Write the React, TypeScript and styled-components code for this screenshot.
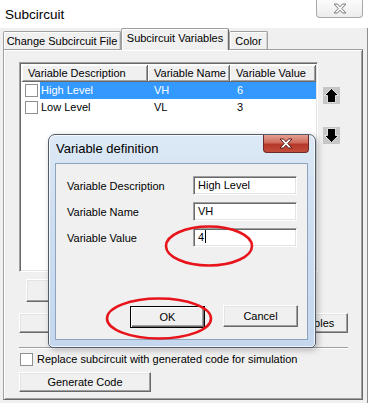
import styled, { createGlobalStyle, css } from "styled-components";

const GlobalStyle = createGlobalStyle`
  html, body {
    margin: 0;
    padding: 0;
    background: #fff;
  }
  body {
    font-family: "Liberation Sans", Arial, sans-serif;
    font-size: 11px;
    color: #000;
  }
`;

const Screen = styled.div`
  position: relative;
  width: 373px;
  height: 407px;
  overflow: hidden;
  background: #fff;
`;

// ---- main window frame
const TitleBar = styled.div`
  width: 368px;
  height: 28px;
  display: flex;
  justify-content: space-between;
  align-items: flex-start;
  padding-left: 5px;
  box-sizing: border-box;
`;

const WindowTitle = styled.div`
  font-size: 13.5px;
  line-height: 29px;
`;

const FrameClose = styled.div`
  width: 47px;
  height: 18px;
  margin-right: 5px;
  box-sizing: border-box;
  border: 1px solid #a9a9a9;
  border-top: none;
  border-radius: 0 0 4px 4px;
  background: linear-gradient(#fbfbfb, #ededed);
  display: flex;
  align-items: center;
  justify-content: center;
`;

const Client = styled.div`
  width: 368px;
  height: 375px;
  box-sizing: border-box;
  background: #f0f0f0;
  border-right: 1px solid #8c8c8c;
  padding: 0 4px 3px 3px;
  display: flex;
  flex-direction: column;
`;

// ---- tabs
const TabStrip = styled.div`
  height: 21px;
  display: flex;
  align-items: flex-end;
  position: relative;
  z-index: 1;
`;

const Tab = styled.div<{ $active?: boolean; $w: number }>`
  width: ${(p) => p.$w}px;
  height: 18px;
  box-sizing: border-box;
  border: 1px solid #a0a0a0;
  border-bottom: none;
  border-radius: 2px 2px 0 0;
  box-shadow: inset 1px 1px 0 #fff, inset -1px 0 0 #d4d4d4;
  background: #f0f0f0;
  text-align: center;
  line-height: 18px;
  ${(p) =>
    p.$active &&
    css`
      height: 22px;
      line-height: 19px;
      margin-bottom: -1px;
      border-right-color: #696969;
    `}
`;

const Panel = styled.div`
  flex: 1;
  box-sizing: border-box;
  border: 1px solid;
  border-color: #a0a0a0 #696969 #696969 #a0a0a0;
  box-shadow: inset 1px 1px 0 #fff, inset -1px -1px 0 #a0a0a0;
  padding: 12px 14px 0 15px;
  display: flex;
  flex-direction: column;
  align-items: flex-start;
`;

// ---- list view
const ListBlock = styled.div`
  display: flex;
  height: 210px;
`;

const ListView = styled.div`
  width: 299px;
  height: 210px;
  box-sizing: border-box;
  border: 1px solid;
  border-color: #a0a0a0 #fff #fff #a0a0a0;
  box-shadow: inset 1px 1px 0 #696969, inset -1px -1px 0 #e3e3e3;
  background: #fff;
  padding: 2px 1px 0 2px;
`;

const HeaderRow = styled.div`
  display: flex;
  height: 17px;
`;

const HeaderCell = styled.div<{ $w: number }>`
  width: ${(p) => p.$w}px;
  box-sizing: border-box;
  background: #f0f0f0;
  border-right: 1px solid #696969;
  border-bottom: 1px solid #696969;
  box-shadow: inset 1px 1px 0 #fff, inset -1px -1px 0 #a0a0a0;
  padding-left: 6px;
  line-height: 16px;
  white-space: nowrap;
  overflow: hidden;
`;

const HeaderFill = styled.div`
  flex: 1;
  background: #f0f0f0;
  border-bottom: 1px solid #696969;
`;

const Row = styled.div`
  display: flex;
  height: 17px;
`;

const CheckCell = styled.div`
  width: 18px;
  display: flex;
  align-items: center;
  padding-left: 3px;
  box-sizing: border-box;
`;

const Box = styled.div`
  width: 13px;
  height: 13px;
  flex: none;
  box-sizing: border-box;
  border: 1px solid #8e8f8f;
  background: #fff;
`;

const RowBody = styled.div<{ $selected?: boolean }>`
  flex: 1;
  display: grid;
  grid-template-columns: 108px 82px 86px;
  line-height: 17px;
  background: ${(p) => (p.$selected ? "#3399ff" : "transparent")};
  color: ${(p) => (p.$selected ? "#fff" : "#000")};
`;

const Cell = styled.div<{ $pad: number }>`
  padding-left: ${(p) => p.$pad}px;
  white-space: nowrap;
`;

const ArrowCol = styled.div`
  margin-left: 5px;
  padding-top: 25px;
  display: flex;
  flex-direction: column;
  gap: 23px;
`;

// ---- buttons
const Button = styled.div<{ $w: number; $h?: number; $default?: boolean }>`
  width: ${(p) => p.$w}px;
  height: ${(p) => p.$h ?? 20}px;
  flex: none;
  box-sizing: border-box;
  background: #f0f0f0;
  border: 1px solid;
  border-color: #fff #696969 #696969 #fff;
  box-shadow: inset -1px -1px 0 #a0a0a0, inset 1px 1px 0 #e3e3e3;
  display: flex;
  align-items: center;
  justify-content: center;
  white-space: nowrap;
  overflow: hidden;
  ${(p) =>
    p.$default &&
    css`
      border: 1px solid #000;
      box-shadow: inset 1px 1px 0 #fff, inset -1px -1px 0 #696969,
        inset -2px -2px 0 #a0a0a0;
    `}
`;

const HiddenButton = styled(Button)`
  margin: 7px 0 0 7px;
`;

const ButtonRow = styled.div`
  align-self: stretch;
  display: flex;
  justify-content: space-between;
  margin-top: 11px;
`;

const Separator = styled.div`
  align-self: stretch;
  margin-top: 14px;
  height: 2px;
  border-top: 1px solid #a0a0a0;
  border-bottom: 1px solid #fff;
  box-sizing: border-box;
`;

const CheckRow = styled.div`
  display: flex;
  align-items: center;
  gap: 4px;
  margin-top: 3px;
  height: 14px;
  padding-left: 1px;
`;

const GenerateButton = styled(Button)`
  margin-top: 6px;
`;

// ---- dialog
const Dialog = styled.div`
  position: absolute;
  left: 48px;
  top: 134px;
  width: 268px;
  height: 214px;
  box-sizing: border-box;
  border: 1px solid #525c69;
  border-radius: 7px 7px 5px 5px;
  background: linear-gradient(180deg, #dde9f6 0%, #cddef1 40%, #c4d7ee 100%);
  box-shadow: inset 0 0 0 1px rgba(255, 255, 255, 0.75),
    2px 2px 6px rgba(0, 0, 0, 0.25);
  display: flex;
  flex-direction: column;
  z-index: 5;
`;

const DialogTitleBar = styled.div`
  height: 28px;
  display: flex;
  justify-content: space-between;
  align-items: flex-start;
  padding-left: 7px;
`;

const DialogTitle = styled.div`
  font-size: 13px;
  line-height: 27px;
`;

const RedClose = styled.div`
  width: 46px;
  height: 18px;
  margin-right: 6px;
  box-sizing: border-box;
  border: 1px solid #6b2a26;
  border-top: none;
  border-radius: 0 0 4px 4px;
  background: linear-gradient(#e2a193 0%, #cf6b5c 45%, #b5372a 55%, #c24d3c 100%);
  display: flex;
  align-items: center;
  justify-content: center;
`;

const DialogClient = styled.div`
  flex: 1;
  margin: 0 7px 7px 6px;
  background: #f0f0f0;
  border: 1px solid #8ea4bd;
  padding: 12px 9px 12px 11px;
  display: flex;
  flex-direction: column;
  align-items: flex-start;
  gap: 7px;
`;

const FieldRow = styled.div`
  display: grid;
  grid-template-columns: 126px 104px;
  align-items: center;
  width: 230px;
  height: 19px;
`;

const FieldLabel = styled.div`
  white-space: nowrap;
`;

const Field = styled.div`
  height: 19px;
  box-sizing: border-box;
  border: 1px solid;
  border-color: #a0a0a0 #fff #fff #a0a0a0;
  box-shadow: inset 1px 1px 0 #696969, inset -1px -1px 0 #e3e3e3;
  background: #fff;
  padding-left: 4px;
  line-height: 17px;
  white-space: nowrap;
`;

const Caret = styled.span`
  display: inline-block;
  width: 1px;
  height: 13px;
  background: #000;
  margin-left: 1px;
  vertical-align: -2px;
`;

const DialogButtons = styled.div`
  align-self: stretch;
  margin-top: auto;
  display: flex;
  justify-content: flex-end;
  align-items: flex-end;
  gap: 18px;
`;

const Marks = styled.svg`
  position: absolute;
  left: 0;
  top: 0;
  z-index: 10;
  pointer-events: none;
`;

// ---- small drawings
const CrossGlyph = ({ fill, stroke }: { fill: string; stroke: string }) => (
  <svg width="14" height="11" viewBox="0 0 14 11">
    <path
      d="M1 1 H4.5 L7 3.8 L9.5 1 H13 L8.8 5.5 L13 10 H9.5 L7 7.2 L4.5 10 H1 L5.2 5.5 Z"
      fill={fill}
      stroke={stroke}
      strokeWidth="1"
      strokeLinejoin="round"
    />
  </svg>
);

const MoveArrow = ({ down }: { down?: boolean }) => (
  <svg width="17" height="17" viewBox="0 0 17 17">
    <rect width="17" height="17" fill="#c6c6c6" />
    <g transform={down ? "rotate(180 8.5 8.5)" : undefined}>
      <path
        d="M8.5 1.5 L15.5 8.5 L12.5 8.5 L12.5 15.5 L4.5 15.5 L4.5 8.5 L1.5 8.5 Z"
        fill="#000"
        stroke="#fff"
        strokeWidth="0.8"
      />
    </g>
  </svg>
);

const rows = [
  { desc: "High Level", name: "VH", value: "6", selected: true },
  { desc: "Low Level", name: "VL", value: "3", selected: false },
];

const fields = [
  { label: "Variable Description", value: "High Level" },
  { label: "Variable Name", value: "VH" },
  { label: "Variable Value", value: "4", caret: true },
];

const App = () => {
  return (
    <Screen>
      <GlobalStyle />
      <TitleBar>
        <WindowTitle>Subcircuit</WindowTitle>
        <FrameClose>
          <CrossGlyph fill="#f6f6f6" stroke="#7d7d7d" />
        </FrameClose>
      </TitleBar>
      <Client>
        <TabStrip>
          <Tab $w={118}>Change Subcircuit File</Tab>
          <Tab $w={108} $active>
            Subcircuit Variables
          </Tab>
          <Tab $w={39}>Color</Tab>
        </TabStrip>
        <Panel>
          <ListBlock>
            <ListView>
              <HeaderRow>
                <HeaderCell $w={126}>Variable Description</HeaderCell>
                <HeaderCell $w={82}>Variable Name</HeaderCell>
                <HeaderCell $w={86}>Variable Value</HeaderCell>
                <HeaderFill />
              </HeaderRow>
              {rows.map((r) => (
                <Row key={r.name}>
                  <CheckCell>
                    <Box />
                  </CheckCell>
                  <RowBody $selected={r.selected}>
                    <Cell $pad={1}>{r.desc}</Cell>
                    <Cell $pad={6}>{r.name}</Cell>
                    <Cell $pad={7}>{r.value}</Cell>
                  </RowBody>
                </Row>
              ))}
            </ListView>
            <ArrowCol>
              <MoveArrow />
              <MoveArrow down />
            </ArrowCol>
          </ListBlock>
          <HiddenButton $w={130} $h={23}>
            Delete
          </HiddenButton>
          <ButtonRow>
            <Button $w={130}>Set as Default</Button>
            <Button $w={100}>Load Variables</Button>
          </ButtonRow>
          <Separator />
          <CheckRow>
            <Box />
            <span>Replace subcircuit with generated code for simulation</span>
          </CheckRow>
          <GenerateButton $w={132}>Generate Code</GenerateButton>
        </Panel>
      </Client>

      <Dialog>
        <DialogTitleBar>
          <DialogTitle>Variable definition</DialogTitle>
          <RedClose>
            <CrossGlyph fill="#ffffff" stroke="#5e1e18" />
          </RedClose>
        </DialogTitleBar>
        <DialogClient>
          {fields.map((f) => (
            <FieldRow key={f.label}>
              <FieldLabel>{f.label}</FieldLabel>
              <Field>
                {f.value}
                {f.caret && <Caret />}
              </Field>
            </FieldRow>
          ))}
          <DialogButtons>
            <Button $w={75} $h={22} $default style={{ marginBottom: -1 }}>
              OK
            </Button>
            <Button $w={75} $h={22}>
              Cancel
            </Button>
          </DialogButtons>
        </DialogClient>
      </Dialog>

      <Marks width="373" height="407" viewBox="0 0 373 407">
        <ellipse cx="209" cy="246" rx="43" ry="19.5" fill="none" stroke="#e8141b" strokeWidth="2.6" />
        <ellipse cx="159" cy="318.5" rx="52" ry="20" fill="none" stroke="#e8141b" strokeWidth="2.6" />
      </Marks>
    </Screen>
  );
};

export default App;
